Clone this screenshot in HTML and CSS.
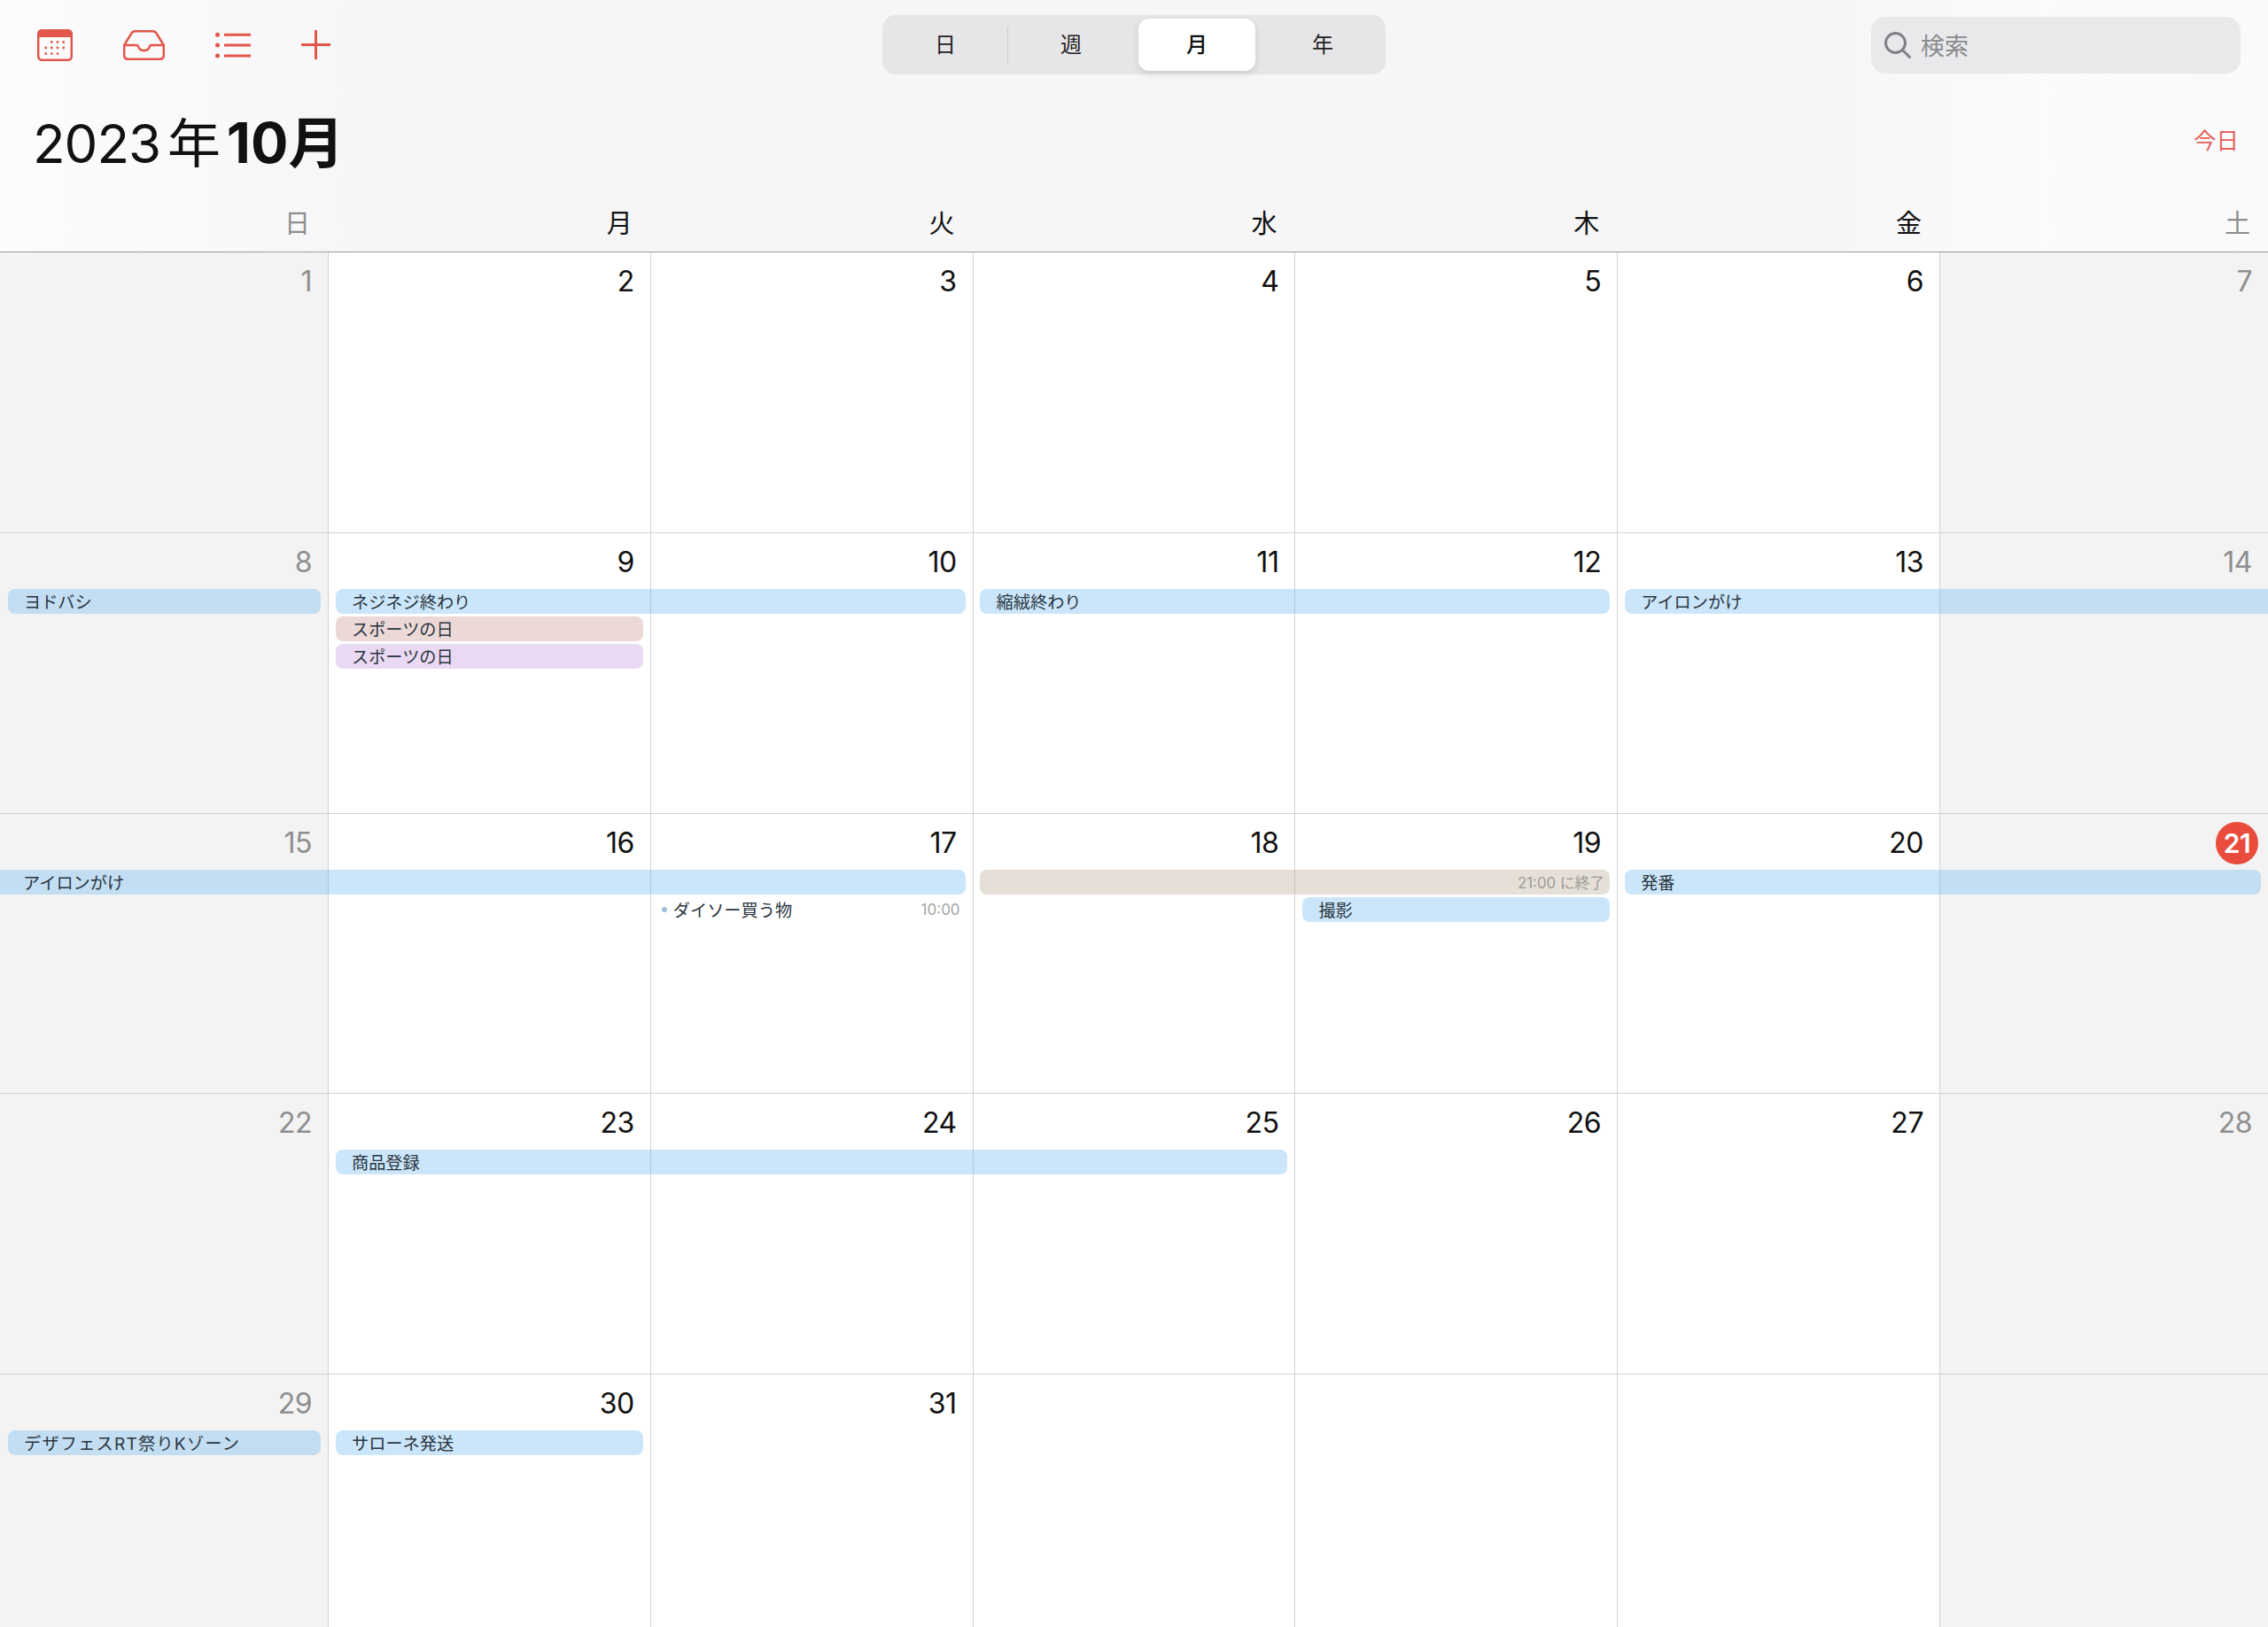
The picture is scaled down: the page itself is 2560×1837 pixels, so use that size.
FILE: index.html
```html
<!DOCTYPE html>
<html lang="ja">
<head>
    <meta charset="UTF-8">
    <meta name="viewport" content="width=device-width, initial-scale=1.0">
    <title>カレンダー</title>
    <link rel="stylesheet" href="styles.css">
</head>
<body>

<div class="app">
    <!-- Header -->
    <header class="header">
        <div class="toolbar">
            <div class="tools">
                <svg class="icon" width="40" height="36" viewBox="0 0 40 36">
                    <rect x="1.2" y="1.2" width="37.6" height="33.6" rx="4"/>
                    <path class="solid" d="M1 5a4 4 0 0 1 4-4h30a4 4 0 0 1 4 4v4H1z"/>
                    <g class="solid no-stroke">
                        <circle cx="16.3" cy="14.5" r="1.4"/><circle cx="23" cy="14.5" r="1.4"/><circle cx="29.7" cy="14.5" r="1.4"/>
                        <circle cx="9.7" cy="21" r="1.4"/><circle cx="16.3" cy="21" r="1.4"/><circle cx="23" cy="21" r="1.4"/><circle cx="29.7" cy="21" r="1.4"/>
                        <circle cx="9.7" cy="27.7" r="1.4"/><circle cx="16.3" cy="27.7" r="1.4"/><circle cx="23" cy="27.7" r="1.4"/>
                    </g>
                </svg>
                <svg class="icon" width="47" height="34" viewBox="0 0 47 34">
                    <path d="M1.2 17 9.5 3.5Q11 1.2 13.5 1.2H33.5Q36 1.2 37.5 3.5L45.8 17V28.5Q45.8 32.8 41.5 32.8H5.5Q1.2 32.8 1.2 28.5Z"/>
                    <path d="M1.2 17H15Q16.8 17 17.3 19Q18.3 23 23.5 23Q28.7 23 29.7 19Q30.2 17 32 17H45.8"/>
                </svg>
                <svg class="icon thick" width="40" height="30" viewBox="0 0 40 30">
                    <g class="solid no-stroke"><circle cx="2.5" cy="3.3" r="2.5"/><circle cx="2.5" cy="15" r="2.5"/><circle cx="2.5" cy="27" r="2.5"/></g>
                    <path d="M10 3.3H40M10 15H40M10 27H40"/>
                </svg>
                <svg class="icon thick" width="33" height="33" viewBox="0 0 33 33">
                    <path d="M16.5 0V33M0 16.5H33"/>
                </svg>
            </div>
            <div class="segments">
                <div class="segment divided">日</div>
                <div class="segment">週</div>
                <div class="segment active">月</div>
                <div class="segment">年</div>
            </div>
            <div class="search">
                <svg class="search-icon" width="30" height="30" viewBox="0 0 30 30">
                    <circle cx="12.5" cy="12.5" r="11"/>
                    <path d="M20.5 20.5 28.5 28.5"/>
                </svg>
                <span>検索</span>
            </div>
        </div>
        <div class="title-row">
            <h1 class="title">2023 年 <b>10月</b></h1>
            <span class="today-link">今日</span>
        </div>
        <div class="weekdays">
            <div class="off">日</div>
            <div>月</div>
            <div>火</div>
            <div>水</div>
            <div>木</div>
            <div>金</div>
            <div class="off">土</div>
        </div>
    </header>

    <!-- Month Grid -->
    <main class="month">
        <section class="week">
            <div class="day off c1">1</div>
            <div class="day c2">2</div>
            <div class="day c3">3</div>
            <div class="day c4">4</div>
            <div class="day c5">5</div>
            <div class="day c6">6</div>
            <div class="day off c7">7</div>
        </section>

        <section class="week">
            <div class="day off c1">8</div>
            <div class="day c2">9</div>
            <div class="day c3">10</div>
            <div class="day c4">11</div>
            <div class="day c5">12</div>
            <div class="day c6">13</div>
            <div class="day off c7">14</div>
            <div class="event line1 c1">ヨドバシ</div>
            <div class="event line1 c2 span2">ネジネジ終わり</div>
            <div class="event line2 c2 pink">スポーツの日</div>
            <div class="event line3 c2 purple">スポーツの日</div>
            <div class="event line1 c4 span2">縮絨終わり</div>
            <div class="event line1 c6 span2 open-right">アイロンがけ</div>
        </section>

        <section class="week">
            <div class="day off c1">15</div>
            <div class="day c2">16</div>
            <div class="day c3">17</div>
            <div class="day c4">18</div>
            <div class="day c5">19</div>
            <div class="day c6">20</div>
            <div class="day off c7"><span class="today">21</span></div>
            <div class="event line1 c1 span3 open-left">アイロンがけ</div>
            <div class="event line1 c4 span2 beige"><span class="end-time">21:00 に終了</span></div>
            <div class="event line1 c6 span2">発番</div>
            <div class="timed line2 c3">
                <i class="dot"></i>
                <span>ダイソー買う物</span>
                <span class="time">10:00</span>
            </div>
            <div class="event line2 c5">撮影</div>
        </section>

        <section class="week">
            <div class="day off c1">22</div>
            <div class="day c2">23</div>
            <div class="day c3">24</div>
            <div class="day c4">25</div>
            <div class="day c5">26</div>
            <div class="day c6">27</div>
            <div class="day off c7">28</div>
            <div class="event line1 c2 span3">商品登録</div>
        </section>

        <section class="week">
            <div class="day off c1">29</div>
            <div class="day c2">30</div>
            <div class="day c3">31</div>
            <div class="day c4"></div>
            <div class="day c5"></div>
            <div class="day c6"></div>
            <div class="day off c7"></div>
            <div class="event line1 c1 mixed">デザフェスRT祭りKゾーン</div>
            <div class="event line1 c2">サローネ発送</div>
        </section>
    </main>
</div>

</body>
</html>
```

FILE: styles.css
```css
/* Global Styles */
* {
    box-sizing: border-box;
}
html,
body {
    height: 100%;
}
body {
    margin: 0;
    background-color: #FFF;
    color: #111;
    font-family: Inter, "Noto Sans CJK JP", sans-serif;
}
.app {
    display: flex;
    flex-direction: column;
    height: 100%;
    overflow: hidden;
}

/* Header */
.header {
    height: 284px;
    flex: none;
    background: linear-gradient(90deg, #FCFCFE 0%, #F6F6F7 18%, #F6F6F7 80%, #FBFBFD 90%, #FAFAFB 100%);
}
.toolbar {
    display: grid;
    grid-template-columns: 1fr auto 1fr;
    align-items: center;
    padding: 17px 31px 0;
}
.tools {
    display: flex;
    align-items: center;
    gap: 57px;
    margin-left: 11px;
}
.icon {
    fill: none;
    stroke: #E2574A;
    stroke-width: 2.5;
}
.icon.thick {
    stroke-width: 3;
}
.icon .solid {
    fill: #E2574A;
    stroke: none;
}
.icon .no-stroke {
    stroke: none;
}

/* Segmented control */
.segments {
    display: flex;
    width: 568px;
    height: 67px;
    padding: 4px 0;
    border-radius: 15px;
    background-color: #E6E6E8;
}
.segment {
    flex: 1;
    margin: 0 5px;
    border-radius: 12px;
    font-size: 24px;
    line-height: 59px;
    text-align: center;
    color: #222;
}
.segment.divided {
    position: relative;
}
.segment.divided::after {
    content: "";
    position: absolute;
    top: 9px;
    right: -5px;
    width: 1px;
    height: 41px;
    background-color: #CDCDD0;
}
.segment.active {
    background-color: #FFF;
    box-shadow: 0 3px 8px rgba(0, 0, 0, 0.12);
    color: #111;
    font-weight: 500;
}

/* Search */
.search {
    display: flex;
    align-items: center;
    justify-self: end;
    gap: 11px;
    width: 417px;
    height: 64px;
    padding-left: 15px;
    border-radius: 16px;
    background-color: #E9E9EC;
    color: #8A8A8F;
    font-size: 27px;
}
.search-icon {
    fill: none;
    stroke: #808084;
    stroke-width: 3;
    stroke-linecap: round;
}

/* Title */
.title-row {
    display: flex;
    justify-content: space-between;
    align-items: center;
    height: 74px;
    margin-top: 35px;
    padding: 0 33px 0 37px;
}
.title {
    margin: 0;
    font-size: 60px;
    font-weight: 400;
    letter-spacing: -1px;
    word-spacing: -8px;
    color: #111;
}
.title b {
    font-size: 63px;
    font-weight: 700;
    letter-spacing: 0;
}
.today-link {
    font-size: 25.5px;
    color: #E2605A;
}

/* Weekdays */
.weekdays,
.week {
    display: grid;
    grid-template-columns: 370px repeat(5, 363.8px) 1fr;
}
.weekdays {
    margin-top: 42px;
    font-size: 29px;
    line-height: 36px;
    text-align: right;
}
.weekdays div {
    padding-right: 20px;
}
.weekdays .off {
    color: #8E8E8E;
}

/* Month grid */
.month {
    flex: 1;
    display: grid;
    grid-template-rows: repeat(4, 316.75px) 1fr;
}
.week {
    grid-template-rows: 63px 31px 31px 31px 1fr;
    border-top: 1px solid #D2D2D2;
}
.week:first-child {
    border-top-color: #9C9C9C;
}
.day {
    grid-row: 1 / -1;
    padding: 14px 18px 0 0;
    border-left: 1px solid #D2D2D2;
    font-size: 32px;
    line-height: 38px;
    text-align: right;
    letter-spacing: -0.5px;
}
.day.off {
    background-color: #F3F3F3;
    color: #8E8E8E;
}
.day.c1 {
    border-left: 0;
}
.today {
    display: inline-block;
    width: 48px;
    height: 48px;
    margin: -6px -7px;
    border-radius: 50%;
    background-color: #E94B3C;
    color: #FFF;
    font-size: 30px;
    font-weight: 600;
    line-height: 48px;
    text-align: center;
}

/* Columns and lines for events */
.c1 { grid-column-start: 1; }
.c2 { grid-column-start: 2; }
.c3 { grid-column-start: 3; }
.c4 { grid-column-start: 4; }
.c5 { grid-column-start: 5; }
.c6 { grid-column-start: 6; }
.c7 { grid-column-start: 7; }
.span2 { grid-column-end: span 2; }
.span3 { grid-column-end: span 3; }
.line1 { grid-row-start: 2; }
.line2 { grid-row-start: 3; }
.line3 { grid-row-start: 4; }

/* Events */
.event {
    display: flex;
    justify-content: space-between;
    height: 28px;
    margin: 0 8px 0 8.5px;
    padding: 0 6px 0 18.5px;
    border-radius: 8px;
    background-color: rgba(97, 179, 240, 0.33);
    color: #2A3540;
    font-size: 19.2px;
    line-height: 30px;
    white-space: nowrap;
}
.event.mixed {
    letter-spacing: 1.2px;
}
.event.pink {
    background-color: rgba(197, 140, 134, 0.33);
}
.event.purple {
    background-color: rgba(191, 140, 215, 0.33);
}
.event.beige {
    justify-content: flex-end;
    background-color: rgba(176, 158, 135, 0.33);
}
.event.open-right {
    margin-right: 0;
    border-radius: 8px 0 0 8px;
}
.event.open-left {
    margin-left: 0;
    padding-left: 26px;
    border-radius: 0 8px 8px 0;
}
.end-time {
    font-size: 16.8px;
    color: #9C9A96;
}
.timed {
    display: flex;
    align-items: center;
    gap: 7px;
    height: 28px;
    margin: 0 8px;
    padding: 0 6px 0 5px;
    color: #2A3540;
    font-size: 19.2px;
    white-space: nowrap;
}
.dot {
    width: 6px;
    height: 6px;
    border-radius: 50%;
    background-color: #9CC0DC;
}
.time {
    margin-left: auto;
    font-size: 17px;
    color: #A6A6A6;
}
```
